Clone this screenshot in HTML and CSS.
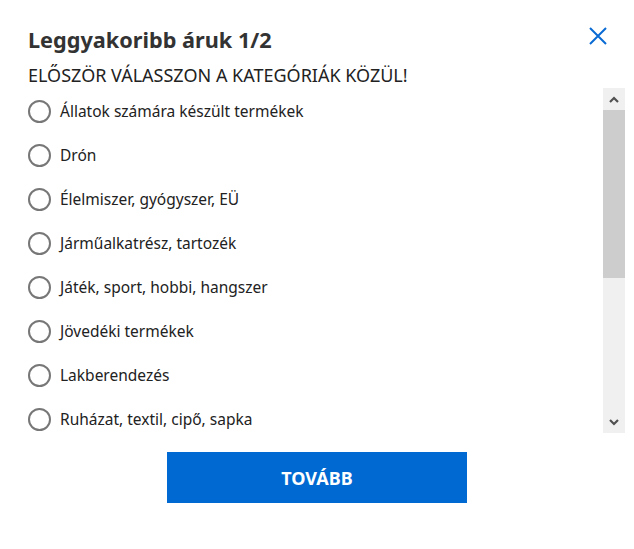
FILE: index.html
```html
<!DOCTYPE html>
<html lang="hu">
<head>
<meta charset="utf-8">
<title>Leggyakoribb áruk</title>
<link rel="stylesheet" href="styles.css">
</head>
<body>
<div class="modal">
  <div class="header">
    <h1 class="title">Leggyakoribb áruk 1/2</h1>
    <button class="close" aria-label="Bezárás">
      <svg width="18" height="18" viewBox="0 0 18 18"><path d="M1 1L17 17M17 1L1 17" stroke="#0a6ad3" stroke-width="2" fill="none"/></svg>
    </button>
  </div>
  <p class="subtitle">ELŐSZÖR VÁLASSZON A KATEGÓRIÁK KÖZÜL!</p>
  <div class="listwrap">
    <ul class="list">
      <li class="item"><span class="radio"></span><span>Állatok számára készült termékek</span></li>
      <li class="item"><span class="radio"></span><span>Drón</span></li>
      <li class="item"><span class="radio"></span><span>Élelmiszer, gyógyszer, EÜ</span></li>
      <li class="item"><span class="radio"></span><span>Járműalkatrész, tartozék</span></li>
      <li class="item"><span class="radio"></span><span>Játék, sport, hobbi, hangszer</span></li>
      <li class="item"><span class="radio"></span><span>Jövedéki termékek</span></li>
      <li class="item"><span class="radio"></span><span>Lakberendezés</span></li>
      <li class="item"><span class="radio"></span><span>Ruházat, textil, cipő, sapka</span></li>
    </ul>
    <div class="scrollbar">
      <div class="sb-btn">
        <svg width="10" height="7" viewBox="0 0 10 7"><path d="M1 6L5 2L9 6" stroke="#505050" stroke-width="2.2" fill="none"/></svg>
      </div>
      <div class="sb-track">
        <div class="sb-thumb"></div>
      </div>
      <div class="sb-btn">
        <svg width="10" height="7" viewBox="0 0 10 7"><path d="M1 1L5 5L9 1" stroke="#505050" stroke-width="2.2" fill="none"/></svg>
      </div>
    </div>
  </div>
  <div class="actions">
    <button class="next"><span class="next-label">TOVÁBB</span></button>
  </div>
</div>
</body>
</html>
```

FILE: styles.css
```css
html, body {
  margin: 0;
  padding: 0;
  background: #ffffff;
}
.modal {
  width: 634px;
  height: 549px;
  box-sizing: border-box;
  padding: 24px 9px 0 28px;
  font-family: "Noto Sans", "Liberation Sans", sans-serif;
  color: #222222;
}
.header {
  display: flex;
  justify-content: space-between;
  align-items: flex-start;
  padding-right: 18px;
}
.title {
  margin: 0;
  font-size: 21.7px;
  line-height: 32px;
  font-weight: 700;
  color: #333333;
}
.close {
  margin-top: 3px;
  padding: 0;
  border: 0;
  background: none;
  width: 18px;
  height: 18px;
  display: flex;
}
.subtitle {
  margin: 8px 0 0 0;
  font-size: 18px;
  line-height: 22px;
  color: #222222;
  white-space: nowrap;
}
.listwrap {
  display: flex;
  height: 345px;
  margin-top: 2px;
}
.list {
  flex: 1;
  list-style: none;
  margin: 0;
  padding: 0;
  overflow: hidden;
}
.item {
  display: flex;
  align-items: center;
  gap: 9px;
  height: 44px;
  font-size: 15.5px;
}
.item:first-child {
  margin-top: 1px;
}
.radio {
  width: 19px;
  height: 19px;
  border: 2px solid #777777;
  border-radius: 50%;
  flex: none;
}
.scrollbar {
  width: 22px;
  background: #f0f0f0;
  display: flex;
  flex-direction: column;
}
.sb-btn {
  height: 22px;
  display: flex;
  align-items: center;
  justify-content: center;
  flex: none;
}
.sb-track {
  flex: 1;
}
.sb-thumb {
  height: 168px;
  background: #cdcdcd;
}
.actions {
  display: flex;
  justify-content: center;
  padding-right: 19px;
  margin-top: 19px;
}
.next {
  width: 300px;
  height: 51px;
  padding: 0;
  border: 0;
  background: #0069d2;
  color: #ffffff;
  font-family: "Noto Sans", "Liberation Sans", sans-serif;
  font-size: 18px;
  font-weight: 700;
  display: flex;
  align-items: center;
  justify-content: center;
}
.next-label {
  line-height: 24px;
}
```
